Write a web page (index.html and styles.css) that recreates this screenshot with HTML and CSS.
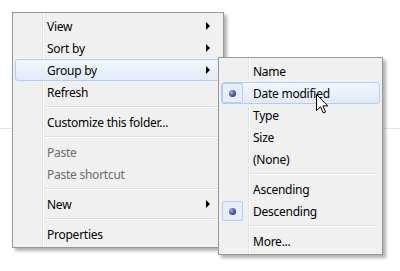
FILE: index.html
```html
<!DOCTYPE html>
<html lang="en">
<head>
  <meta charset="UTF-8">
  <title>Group by menu</title>
  <link rel="stylesheet" href="styles.css">
</head>
<body>

  <div class="desk">

    <ul class="menu main">
      <li class="item"><span class="icon"></span><span class="label">View</span><span class="arrow"></span></li>
      <li class="item"><span class="icon"></span><span class="label">Sort by</span><span class="arrow"></span></li>
      <li class="item hot"><span class="icon"></span><span class="label">Group by</span><span class="arrow"></span></li>
      <li class="item"><span class="icon"></span><span class="label">Refresh</span></li>
      <li class="sep"></li>
      <li class="item"><span class="icon"></span><span class="label">Customize this folder...</span></li>
      <li class="sep"></li>
      <li class="item off"><span class="icon"></span><span class="label">Paste</span></li>
      <li class="item off"><span class="icon"></span><span class="label">Paste shortcut</span></li>
      <li class="sep"></li>
      <li class="item"><span class="icon"></span><span class="label">New</span><span class="arrow"></span></li>
      <li class="sep"></li>
      <li class="item"><span class="icon"></span><span class="label">Properties</span></li>
    </ul>

    <!-- submenu of "Group by" -->
    <ul class="menu sub">
      <li class="item"><span class="icon"></span><span class="label">Name</span></li>
      <li class="item hot"><span class="icon checked"><span class="dot"></span></span><span class="label">Date modified</span></li>
      <li class="item"><span class="icon"></span><span class="label">Type</span></li>
      <li class="item"><span class="icon"></span><span class="label">Size</span></li>
      <li class="item"><span class="icon"></span><span class="label">(None)</span></li>
      <li class="sep"></li>
      <li class="item"><span class="icon"></span><span class="label">Ascending</span></li>
      <li class="item"><span class="icon checked"><span class="dot"></span></span><span class="label">Descending</span></li>
      <li class="sep"></li>
      <li class="item"><span class="icon"></span><span class="label">More...</span></li>
    </ul>

    <svg class="cursor" width="13" height="20" viewBox="0 0 13 20">
      <path d="M0.5 0.5 L0.5 16.5 L4.5 12.8 L7.3 19 L9.6 18 L6.9 11.9 L11.8 11.9 Z" fill="#fff" stroke="#000" stroke-width="1" stroke-linejoin="miter"/>
    </svg>

  </div>

</body>
</html>
```

FILE: styles.css
```css
body {
  margin: 0;
  font-family: "Noto Sans", sans-serif;
  font-size: 12px;
  letter-spacing: -0.25px;
  color: #000;
  background: linear-gradient(#fff 128px, #e4e4e4 128px, #e4e4e4 129px, #fff 129px);
  height: 271px;
  overflow: hidden;
}

.desk {
  position: relative;
  padding: 12px 0 0 12px;
}

.menu {
  list-style: none;
  margin: 0;
  padding: 2px;
  border: 1px solid #979797;
  box-shadow: 3px 3px 3px rgba(0, 0, 0, 0.3);
  background: linear-gradient(to right, transparent 29px, #e2e3e3 29px, #e2e3e3 30px, #fff 30px, #fff 31px, transparent 31px) #f0f0f0;
}

.main {
  width: 206px;
}

.sub {
  position: absolute;
  left: 218px;
  top: 57px;
  width: 159px;
}

.item {
  display: flex;
  align-items: center;
  height: 20px;
  border: 1px solid transparent;
  border-radius: 3px;
}

.item.hot {
  border-color: #b3cdec;
  background: linear-gradient(#f3f7fd, #e1eaf8);
}

.item.off {
  color: #6d6d6d;
}

.icon {
  display: flex;
  align-items: center;
  justify-content: center;
  width: 21px;
  height: 20px;
  box-sizing: border-box;
}

.icon.checked {
  border: 1px solid #b6cdea;
  border-radius: 2px;
  background: #e6eef9;
}

.dot {
  width: 7px;
  height: 7px;
  border-radius: 50%;
  background: radial-gradient(circle at 35% 35%, #a9aee0, #4a4f9a 55%, #23265c);
}

.label {
  padding-left: 10px;
  white-space: nowrap;
}

.arrow {
  margin-left: auto;
  margin-right: 10px;
  width: 0;
  height: 0;
  border-left: 4px solid #000;
  border-top: 4px solid transparent;
  border-bottom: 4px solid transparent;
}

.sep {
  height: 0;
  margin: 3px 2px 3px 29px;
  border-top: 1px solid #e0e0e0;
  border-bottom: 1px solid #fff;
}

.cursor {
  position: absolute;
  left: 316px;
  top: 94px;
}
```
